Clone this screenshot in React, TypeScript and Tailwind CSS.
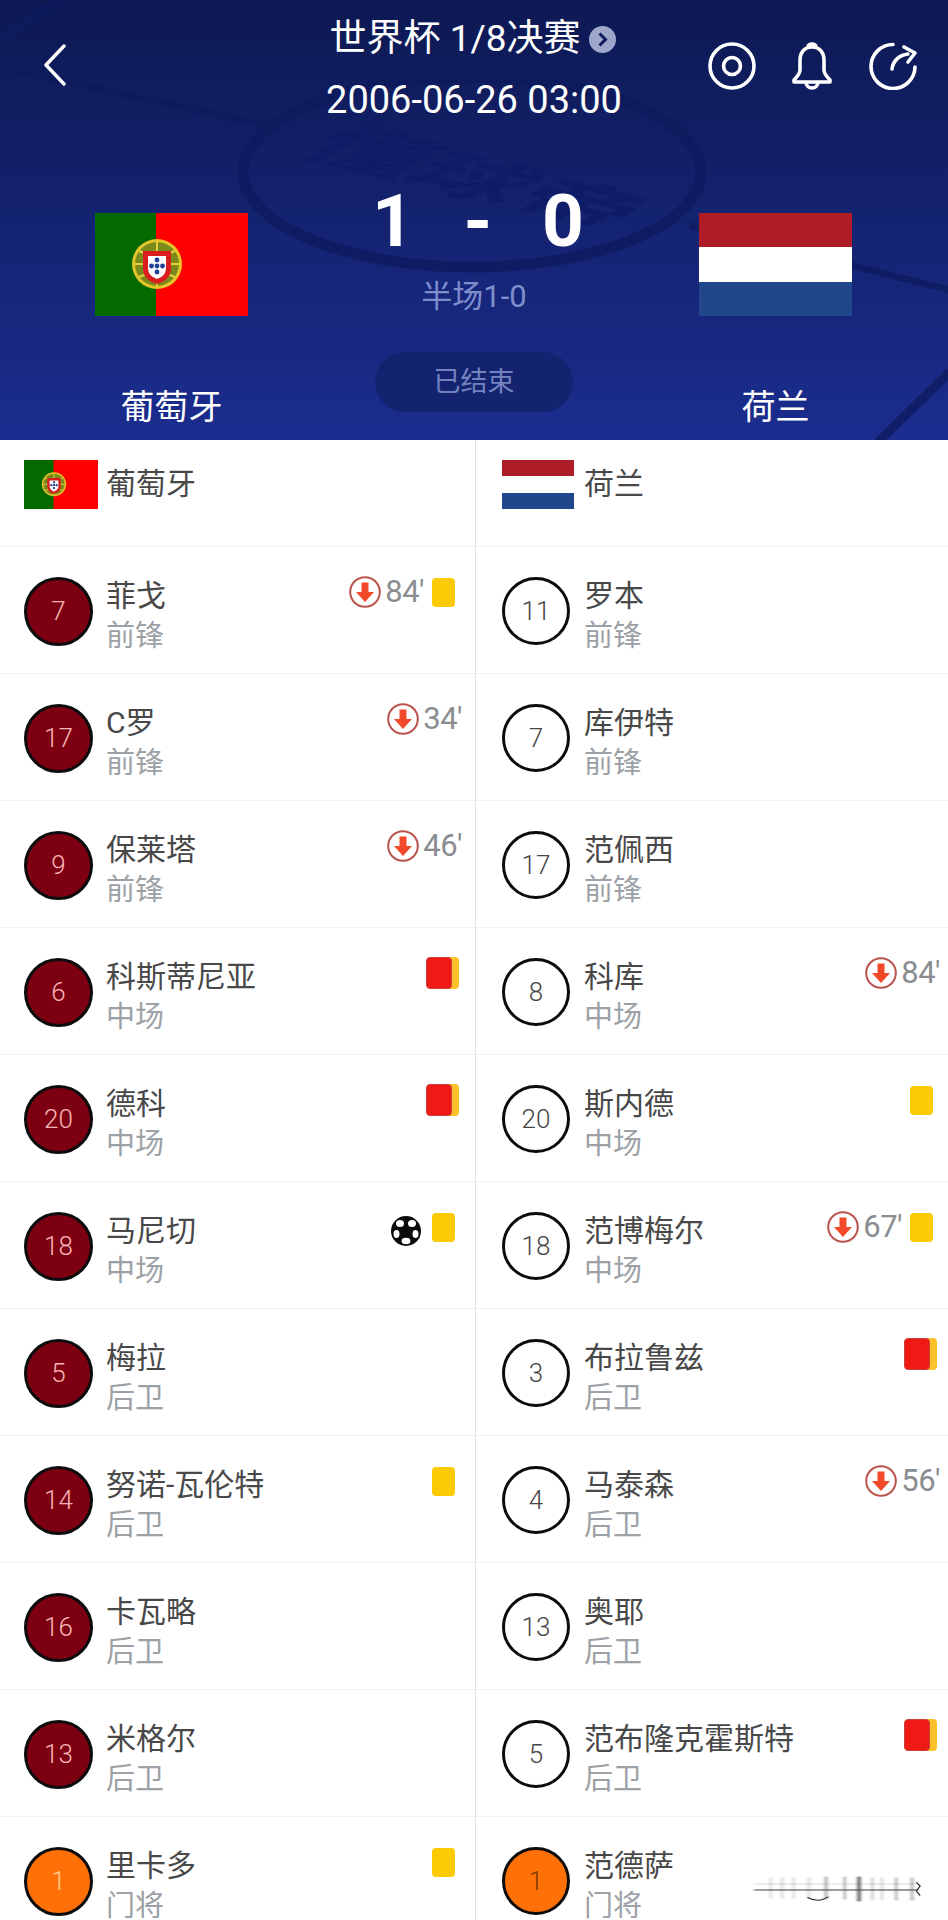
import React from 'react'

type Player = {
    no: number;
    name: string;
    pos: string;
    sub?: string;
    card?: 'y' | 'r';
    ball?: boolean;
}

const home: Player[] = [
    { no: 7, name: '菲戈', pos: '前锋', sub: "84'", card: 'y' },
    { no: 17, name: 'C罗', pos: '前锋', sub: "34'" },
    { no: 9, name: '保莱塔', pos: '前锋', sub: "46'" },
    { no: 6, name: '科斯蒂尼亚', pos: '中场', card: 'r' },
    { no: 20, name: '德科', pos: '中场', card: 'r' },
    { no: 18, name: '马尼切', pos: '中场', ball: true, card: 'y' },
    { no: 5, name: '梅拉', pos: '后卫' },
    { no: 14, name: '努诺-瓦伦特', pos: '后卫', card: 'y' },
    { no: 16, name: '卡瓦略', pos: '后卫' },
    { no: 13, name: '米格尔', pos: '后卫' },
    { no: 1, name: '里卡多', pos: '门将', card: 'y' },
]

const away: Player[] = [
    { no: 11, name: '罗本', pos: '前锋' },
    { no: 7, name: '库伊特', pos: '前锋' },
    { no: 17, name: '范佩西', pos: '前锋' },
    { no: 8, name: '科库', pos: '中场', sub: "84'" },
    { no: 20, name: '斯内德', pos: '中场', card: 'y' },
    { no: 18, name: '范博梅尔', pos: '中场', sub: "67'", card: 'y' },
    { no: 3, name: '布拉鲁兹', pos: '后卫', card: 'r' },
    { no: 4, name: '马泰森', pos: '后卫', sub: "56'" },
    { no: 13, name: '奥耶', pos: '后卫' },
    { no: 5, name: '范布隆克霍斯特', pos: '后卫', card: 'r' },
    { no: 1, name: '范德萨', pos: '门将' },
]

const PortugalFlag = ({ className }: { className: string }) => (
    <svg viewBox="0 0 153 103" preserveAspectRatio="none" className={className}>
        <rect width="153" height="103" fill="#ff0000" />
        <rect width="61" height="103" fill="#046a00" />
        <circle cx="62" cy="51" r="25" fill="#e4c62a" />
        <circle cx="62" cy="51" r="22" fill="#7c8a1c" />
        <path d="M40 51h44M62 29v44M44 38q18 8 36 0M44 64q18-8 36 0" stroke="#e8d040" strokeWidth="2" fill="none" />
        <path d="M48 38h28v17q0 12-14 16q-14-4-14-16z" fill="#d81e1e" />
        <path d="M53 43h18v12q0 8-9 11q-9-3-9-11z" fill="#ffffff" />
        <circle cx="62" cy="47" r="2.4" fill="#1f3f96" />
        <circle cx="56.5" cy="53" r="2.4" fill="#1f3f96" />
        <circle cx="62" cy="53" r="2.4" fill="#1f3f96" />
        <circle cx="67.5" cy="53" r="2.4" fill="#1f3f96" />
        <circle cx="62" cy="59" r="2.4" fill="#1f3f96" />
    </svg>
)

const SubIcon = () => (
    <svg viewBox="0 0 32 32" className="w-8 h-8 shrink-0">
        <circle cx="16" cy="16" r="14.8" fill="#fff" stroke="#b9544c" strokeWidth="2" />
        <path d="M12.5 6.5h7v9.5h5.5L16 26 7 16h5.5z" fill="#f2492a" />
    </svg>
)

const BallIcon = () => (
    <svg viewBox="0 0 30 30" className="w-[30px] h-[30px] shrink-0 mr-[3px] mt-[7px]">
        <circle cx="15" cy="15" r="15" fill="#0a0a0a" />
        <ellipse cx="9" cy="7.5" rx="4" ry="3.6" fill="#fff" />
        <ellipse cx="21" cy="7.5" rx="4" ry="3.6" fill="#fff" />
        <ellipse cx="5.5" cy="18" rx="3" ry="4" fill="#fff" />
        <ellipse cx="24.5" cy="18" rx="3" ry="4" fill="#fff" />
        <ellipse cx="15" cy="25" rx="4.4" ry="3.2" fill="#fff" />
    </svg>
)

const Events = ({ p }: { p: Player }) => (
    <div className={`flex items-center h-8 mt-[29px] ${p.sub && !p.card ? '-mr-[7px]' : ''} ${p.card === 'r' ? '-mr-[4px]' : ''}`}>
        {p.ball && <BallIcon />}
        {p.sub && (
            <>
                <SubIcon />
                <span className="ml-1 text-[31px] leading-8 tracking-[-0.5px] text-[#8a8d90]">{p.sub}</span>
            </>
        )}
        {p.card === 'y' && <div className="ml-2 w-[23px] h-[29px] rounded-[4px] bg-[#fdcb06]"></div>}
        {p.card === 'r' && (
            <div className="flex">
                <div className="z-10 w-[26px] h-[32px] rounded-[4px] bg-[#ef1a16] border border-[#c9403a]"></div>
                <div className="-ml-[4px] w-[11px] h-[32px] rounded-r-[4px] bg-[#fbc02a]"></div>
            </div>
        )}
    </div>
)

const Cell = ({ p, side }: { p: Player; side: 'home' | 'away' }) => {
    const keeper = p.pos === '门将'
    let circle = 'bg-white text-[#454545]'
    if (side === 'home') circle = 'bg-[#7d0012] text-[#f7b4b4]'
    if (keeper) circle = side === 'home' ? 'bg-[#ff7006] text-[#ffcf8a]' : 'bg-[#ff7006] text-[#7a3a00]'

    return (
        <div className={`flex items-start h-full ${side === 'home' ? 'pl-6 pr-5' : 'pl-[26px] pr-[15px]'}`}>
            <div className={`mt-[30px] rounded-full border-[3px] border-[#0c0c0c] flex items-center justify-center text-[26px] font-light shrink-0 ${side === 'home' ? 'w-[69px] h-[69px]' : 'w-[68px] h-[68px]'} ${circle}`}>
                {p.no}
            </div>
            <div className={`flex-1 pt-[28px] ${side === 'home' ? 'ml-[13px]' : 'ml-[14px]'}`}>
                <p className="text-[30px] leading-[41px] text-[#484848]">{p.name}</p>
                <p className="text-[29px] leading-[41px] text-[#9ba1a6]">{p.pos}</p>
            </div>
            <Events p={p} />
        </div>
    )
}

const HeaderBackdrop = () => (
    <svg viewBox="0 0 948 440" className="absolute inset-0 w-full h-full">
        <g stroke="#0d1a5e" strokeWidth="7" fill="none" opacity="0.75">
            <path d="M-5 66 L270 126" />
            <path d="M70 -5 L0 38" strokeWidth="10" />
            <path d="M690 225 L950 290" />
            <path d="M950 372 L878 442" strokeWidth="9" />
            <ellipse cx="472" cy="172" rx="229" ry="95" strokeWidth="11" />
        </g>
        <text x="0" y="0" transform="translate(450 192) rotate(14) scale(1.25 0.62) skewX(-28)" textAnchor="middle" fontSize="86" fontWeight="700" fill="#0e1b66" fontFamily="'Noto Sans CJK SC', sans-serif" opacity="0.9">
            懂球帝
        </text>
    </svg>
)

const Watermark = () => (
    <svg viewBox="0 0 180 30" className="absolute right-[24px] bottom-[16px] w-[172px] h-[30px]">
        <defs>
            <filter id="smear" x="-10%" y="-40%" width="120%" height="180%">
                <feGaussianBlur stdDeviation="1.6 0.8" />
            </filter>
        </defs>
        <rect width="180" height="30" fill="#ffffff" opacity="0.85" />
        <g filter="url(#smear)" fill="#555555">
            <rect x="2" y="15" width="172" height="2" opacity="0.6" />
            <rect x="2" y="9" width="172" height="1.5" opacity="0.15" />
            <rect x="18" y="3" width="3" height="22" opacity="0.18" />
            <rect x="30" y="3" width="3" height="22" opacity="0.22" />
            <rect x="42" y="3" width="3" height="22" opacity="0.18" />
            <rect x="58" y="3" width="3" height="22" opacity="0.2" />
            <rect x="76" y="2" width="3" height="24" opacity="0.5" />
            <rect x="96" y="2" width="2" height="24" opacity="0.6" />
            <rect x="110" y="2" width="4" height="26" opacity="0.85" />
            <rect x="125" y="3" width="2" height="24" opacity="0.4" />
            <rect x="135" y="3" width="2" height="24" opacity="0.3" />
            <rect x="150" y="3" width="2" height="24" opacity="0.6" />
            <rect x="166" y="3" width="3" height="24" opacity="0.45" />
        </g>
        <path d="M58 24q12 6 22-1M172 8l4 4-4 5 4 5" stroke="#222" strokeWidth="1.2" fill="none" />
    </svg>
)

export default function App() {
    return (
        <div className="relative w-[948px] h-[1920px] overflow-hidden bg-white font-[Roboto,'Noto_Sans_CJK_SC',sans-serif]">
            <header className="relative h-[440px] bg-gradient-to-b from-[#0d1953] to-[#1b2d8f] text-white overflow-hidden">
                <HeaderBackdrop />
                <div className="relative grid grid-cols-[344px_260px_344px] pt-4">
                    <div className="pl-[44px] pt-[28px]">
                        <svg viewBox="0 0 22 42" className="w-[22px] h-[42px]" fill="none" stroke="#fff" strokeWidth="3.4" strokeLinecap="round" strokeLinejoin="round">
                            <path d="M20 2 L2 21 L20 40" />
                        </svg>
                    </div>
                    <div className="flex flex-col items-center whitespace-nowrap">
                        <div className="flex items-center h-11 mt-[1px] -ml-[3px]">
                            <span className="text-[37px] leading-[44px]">世界杯 1/8决赛</span>
                            <svg viewBox="0 0 27 27" className="ml-2 w-[27px] h-[27px]">
                                <circle cx="13.5" cy="13.5" r="13.5" fill="#9ea7cb" />
                                <path d="M10.5 7.5 L16.5 13.5 L10.5 19.5" stroke="#0f1c5e" strokeWidth="3" fill="none" />
                            </svg>
                        </div>
                        <div className="mt-[17px] text-[38px] leading-[44px]">2006-06-26 03:00</div>
                    </div>
                    <div className="flex items-start justify-end gap-[35px] pr-[30px] pt-[26px]">
                        <svg viewBox="0 0 48 48" className="w-12 h-12" fill="none" stroke="#fff" strokeWidth="3.6">
                            <circle cx="24" cy="24" r="22" />
                            <circle cx="24" cy="24" r="8.5" />
                        </svg>
                        <svg viewBox="0 0 42 48" className="w-[42px] h-12" fill="none" stroke="#fff" strokeWidth="3.6" strokeLinejoin="round">
                            <path d="M21 5c-8 0-12 6-12 13v10c0 4-3 7-6 10v2h36v-2c-3-3-6-6-6-10V18c0-7-4-13-12-13z" />
                            <path d="M17 5c0-4 8-4 8 0M15 40c0 8 12 8 12 0" />
                        </svg>
                        <svg viewBox="0 0 50 48" className="w-[50px] h-12" fill="none" stroke="#fff" strokeWidth="3.6" strokeLinecap="round" strokeLinejoin="round">
                            <path d="M25 2.5A22 22 0 1 0 47 25" />
                            <path d="M24 27c1-8 7-14 16-15M36 5l11 6-7 9" />
                        </svg>
                    </div>
                </div>
                <div className="relative mt-[60px] grid grid-cols-[343px_260px_345px]">
                    <div className="flex flex-col items-center pt-[31px]">
                        <PortugalFlag className="w-[153px] h-[103px]" />
                        <p className="mt-[69px] text-[34px] leading-[44px]">葡萄牙</p>
                    </div>
                    <div className="flex flex-col items-center">
                        <div className="flex h-[78px] pl-[10px] text-[73px] leading-[78px] font-bold">
                            <span className="w-[85px] text-center">1</span>
                            <span className="w-[85px] text-center">-</span>
                            <span className="w-[85px] text-center">0</span>
                        </div>
                        <p className="mt-[17px] pl-[2px] text-[31px] leading-[40px] text-[#7f8ecb]">半场1-0</p>
                        <div className="mt-[35px] ml-[2px] w-[198px] h-[60px] rounded-full bg-[#13236f] flex items-center justify-center pt-[1px] text-[27px] text-[#7483bf]">
                            已结束
                        </div>
                    </div>
                    <div className="flex flex-col items-center pt-[31px]">
                        <div className="w-[153px] h-[103px] flex flex-col">
                            <div className="flex-1 bg-[#ae1c28]"></div>
                            <div className="flex-1 bg-white"></div>
                            <div className="flex-1 bg-[#21468b]"></div>
                        </div>
                        <p className="mt-[69px] text-[34px] leading-[44px]">荷兰</p>
                    </div>
                </div>
            </header>

            <div className="grid grid-cols-[476px_1fr] h-[107px] border-b border-[#f0f0f0]">
                <div className="flex items-start pl-6 pt-5 border-r border-[#e4e4e4]">
                    <PortugalFlag className="w-[74px] h-[49px]" />
                    <span className="ml-2 mt-[1px] text-[30px] leading-[46px] text-[#484848]">葡萄牙</span>
                </div>
                <div className="flex items-start pl-[26px] pt-5">
                    <div className="w-[72px] h-[49px] flex flex-col">
                        <div className="flex-1 bg-[#ae1c28]"></div>
                        <div className="flex-1 bg-white"></div>
                        <div className="flex-1 bg-[#21468b]"></div>
                    </div>
                    <span className="ml-[10px] mt-[1px] text-[30px] leading-[46px] text-[#484848]">荷兰</span>
                </div>
            </div>

            {home.map((p, i) => (
                <div key={p.name} className="grid grid-cols-[476px_1fr] h-[127px] border-b border-[#f0f0f0]">
                    <div className="border-r border-[#e4e4e4]">
                        <Cell p={p} side="home" />
                    </div>
                    <Cell p={away[i]} side="away" />
                </div>
            ))}

            <Watermark />
        </div>
    )
}
